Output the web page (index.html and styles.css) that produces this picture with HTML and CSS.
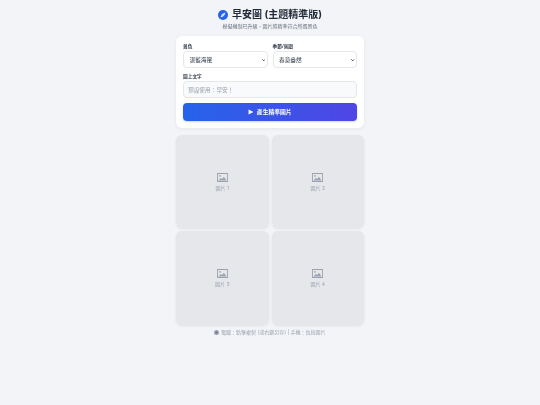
FILE: index.html
```html
<!DOCTYPE html>
<html lang="zh-Hant">
<head>
<meta charset="utf-8">
<title>早安圖</title>
<link rel="stylesheet" href="styles.css">
</head>
<body>
<main class="page">
  <header class="head">
    <h1 class="title">
      <svg class="logo" viewBox="0 0 20 20" aria-hidden="true"><circle cx="10" cy="10" r="10" fill="#2563eb"/><path d="M15 5 L11.8 11.8 L5 15 L8.2 8.2 Z" fill="#fff"/><circle cx="10" cy="10" r="1.2" fill="#2563eb"/></svg>
      <span>早安圖 (主題精準版)</span>
    </h1>
    <p class="sub">模擬機制已升級，圖片將精準符合所選景色</p>
  </header>
  <section class="card">
    <div class="row">
      <label class="field"><span class="lab">景色</span>
        <span class="selwrap"><select class="ctl sel"><option>湛藍海邊</option></select><svg class="chev" viewBox="0 0 10 6" aria-hidden="true"><path d="M1 1 L5 5 L9 1" fill="none" stroke="#1f2937" stroke-width="2.4"/></svg></span></label>
      <label class="field"><span class="lab">季節/氛圍</span>
        <span class="selwrap"><select class="ctl sel"><option>春意盎然</option></select><svg class="chev" viewBox="0 0 10 6" aria-hidden="true"><path d="M1 1 L5 5 L9 1" fill="none" stroke="#1f2937" stroke-width="2.4"/></svg></span></label>
    </div>
    <label class="field"><span class="lab">圖上文字</span>
      <input class="ctl txt" placeholder="預設使用：早安！"></label>
    <button class="btn"><svg class="play" viewBox="0 0 10 10" aria-hidden="true"><path d="M1 0.3 L9.7 5 L1 9.7 Z" fill="#fff"/></svg><span>產生精準圖片</span></button>
  </section>
  <section class="grid">
    <div class="tile"><svg class="pic" viewBox="0 0 20 20" aria-hidden="true"><path fill-rule="evenodd" d="M0 2h20v16H0z M1.6 3.6v12.8h16.8V3.6z" fill="#9ca3af"/><circle cx="5.5" cy="7" r="1.6" fill="#9ca3af"/><path d="M2.5 15.5 L7 11 L9.5 12.5 L12.5 8.5 L17.5 15.5 Z" fill="#9ca3af"/></svg><span>圖片 1</span></div>
    <div class="tile"><svg class="pic" viewBox="0 0 20 20" aria-hidden="true"><path fill-rule="evenodd" d="M0 2h20v16H0z M1.6 3.6v12.8h16.8V3.6z" fill="#9ca3af"/><circle cx="5.5" cy="7" r="1.6" fill="#9ca3af"/><path d="M2.5 15.5 L7 11 L9.5 12.5 L12.5 8.5 L17.5 15.5 Z" fill="#9ca3af"/></svg><span>圖片 2</span></div>
    <div class="tile"><svg class="pic" viewBox="0 0 20 20" aria-hidden="true"><path fill-rule="evenodd" d="M0 2h20v16H0z M1.6 3.6v12.8h16.8V3.6z" fill="#9ca3af"/><circle cx="5.5" cy="7" r="1.6" fill="#9ca3af"/><path d="M2.5 15.5 L7 11 L9.5 12.5 L12.5 8.5 L17.5 15.5 Z" fill="#9ca3af"/></svg><span>圖片 3</span></div>
    <div class="tile"><svg class="pic" viewBox="0 0 20 20" aria-hidden="true"><path fill-rule="evenodd" d="M0 2h20v16H0z M1.6 3.6v12.8h16.8V3.6z" fill="#9ca3af"/><circle cx="5.5" cy="7" r="1.6" fill="#9ca3af"/><path d="M2.5 15.5 L7 11 L9.5 12.5 L12.5 8.5 L17.5 15.5 Z" fill="#9ca3af"/></svg><span>圖片 4</span></div>
  </section>
  <footer class="foot">
    <svg class="info" viewBox="0 0 10 10" aria-hidden="true"><circle cx="5" cy="5" r="5" fill="#9ca3af"/><circle cx="5" cy="5" r="2" fill="#6b7280"/></svg>
    <span>電腦：點擊複製 (或右鍵另存) | 手機：長按圖片</span>
  </footer>
</main>
</body>
</html>
```
FILE: styles.css
```css
* { box-sizing: border-box; }
html, body { margin: 0; height: 100%; }
body {
  background: #f3f4f8;
  font-family: Inter, "Noto Sans CJK TC", "Noto Sans", sans-serif;
  color: #1f2937;
}
.page {
  width: 188px;
  margin: 0 auto;
  padding-top: 8px;
  display: flex;
  flex-direction: column;
  filter: blur(.35px);
}
.head { text-align: center; height: 28px; }
.title {
  margin: 0;
  display: flex;
  justify-content: center;
  align-items: center;
  gap: 4px;
  font-size: 10px;
  line-height: 13px;
  font-weight: 700;
  color: #1f2937;
}
.logo { width: 10px; height: 10px; }
.sub {
  margin: 1.5px 0 0;
  font-size: 5px;
  line-height: 7px;
  color: #6b7280;
}
.card {
  background: #fff;
  border-radius: 6px;
  padding: 7px;
  height: 92px;
  box-shadow: 0 1px 4px rgba(0, 0, 0, .06);
  display: flex;
  flex-direction: column;
  gap: 5px;
}
.row { display: grid; grid-template-columns: 1fr 1fr; gap: 5px; }
.field { display: flex; flex-direction: column; gap: 2px; }
.lab {
  font-size: 4.7px;
  line-height: 6px;
  font-weight: 600;
  color: #374151;
}
.selwrap { position: relative; display: block; }
.ctl {
  height: 16.5px;
  width: 100%;
  border: 0.6px solid #e5e7eb;
  border-radius: 4px;
  background: #f9fafb;
  font-family: inherit;
  font-size: 5.7px;
  color: #1f2937;
  padding: 0 4px;
  outline: 0;
  display: block;
}
.sel {
  height: 17px;
  appearance: none;
  background: #fff;
  padding: 0 5.5px;
}
.chev {
  position: absolute;
  right: 2.5px;
  top: 7.7px;
  width: 3.5px;
  height: 2.2px;
}
.txt::placeholder { color: #9ca3af; }
.btn {
  height: 18.5px;
  flex: none;
  border: 0;
  border-radius: 4px;
  background: linear-gradient(90deg, #2563eb, #4f46e5);
  box-shadow: 0 1px 2px rgba(37, 99, 235, .25);
  color: #fff;
  font-family: inherit;
  font-size: 5.8px;
  font-weight: 700;
  display: flex;
  align-items: center;
  justify-content: center;
  gap: 3px;
  padding: 0;
}
.play { width: 5.5px; height: 6px; }
.grid {
  margin-top: 7px;
  display: grid;
  grid-template-columns: 1fr 1fr;
  grid-auto-rows: 93.25px;
  gap: 3px;
}
.tile {
  background: #e5e7eb;
  border-radius: 6px;
  box-shadow: 0 1px 3px rgba(0, 0, 0, .08);
  display: flex;
  flex-direction: column;
  align-items: center;
  justify-content: center;
  gap: 2px;
  font-size: 5px;
  line-height: 7px;
  color: #9ca3af;
}
.pic { width: 11px; height: 11px; }
.foot {
  margin-top: 4.5px;
  display: flex;
  align-items: center;
  justify-content: center;
  gap: 1.5px;
  font-size: 5px;
  line-height: 7px;
  color: #9ca3af;
}
.info { width: 5px; height: 5px; }
```
